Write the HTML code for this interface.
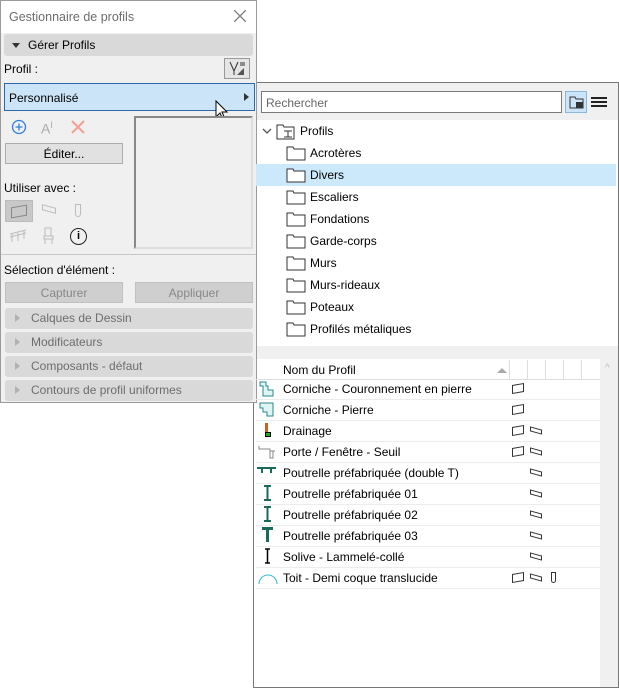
<!DOCTYPE html><html><head><style>
body{margin:0;width:619px;height:688px;background:#fff;position:relative;overflow:hidden;font-family:"Liberation Sans",sans-serif;font-size:12px;color:#000}
div{position:absolute;box-sizing:border-box}
.t{white-space:nowrap}
.hd{left:4px;width:248px;height:21px;background:#d9d9d9;border-radius:3px;color:#6d6d6d;padding:3px 0 0 26px}
.hd:before{content:"";position:absolute;left:10px;top:6px;border-left:5px solid #b0b0b0;border-top:4px solid transparent;border-bottom:4px solid transparent}
.row{left:256px;width:360px;height:22px;padding:4px 0 0 54px}
.fd{position:absolute;left:30px;top:3px}
.lr{left:256px;width:344px;height:21px;border-bottom:1px solid #ececec;padding:3px 0 0 27px}
</style></head><body>
<!-- right panel -->
<div style="left:253px;top:82px;width:366px;height:606px;border:1px solid #777;background:#fff">
<div style="left:0;top:0;width:364px;height:37px;background:#f0f0f0"></div>
<div class="t" style="left:7px;top:8px;width:301px;height:22px;border:1px solid #7a7a7a;background:#fff;color:#666;padding:4px 0 0 4px">Rechercher</div>
<div style="left:311px;top:8px;width:22px;height:22px;background:#cce4f7;border:1px solid #88b8e0"></div>
<svg style="position:absolute;left:315px;top:12px" width="15" height="14"><path d="M1 2h5l1 2h7v9H1z" fill="none" stroke="#333"/><rect x="7" y="7" width="7" height="6" fill="#333"/></svg>
<div style="left:337px;top:14px;width:16px;height:10px;border-top:2px solid #222;border-bottom:2px solid #222"></div>
<div style="left:337px;top:18px;width:16px;height:2px;background:#222"></div>
<div style="left:0;top:263px;width:364px;height:13px;background:#f0f0f0"></div>
<div style="left:346px;top:276px;width:18px;height:328px;background:#f0f0f0;color:#bbb;font-size:10px;padding:4px 0 0 5px">^</div>
</div>
<!-- left panel -->
<div style="left:0;top:0;width:257px;height:403px;background:#f0f0f0;border:1px solid #9a9a9a">
<div style="left:0;top:0;width:255px;height:32px;background:#fff"></div>
<div class="t" style="left:8px;top:9px;color:#6d6d6d;font-size:12.5px">Gestionnaire de profils</div>
<svg style="position:absolute;left:233px;top:9px" width="12" height="12"><path d="M0 0L12 12M12 0L0 12" stroke="#777" stroke-width="1.2"/></svg>
<div style="left:3px;top:33px;width:249px;height:22px;background:#d9d9d9;border-radius:3px"></div>
<div style="left:11px;top:42px;border-top:5px solid #333;border-left:4px solid transparent;border-right:4px solid transparent"></div>
<div class="t" style="left:27px;top:37px">Gérer Profils</div>
<div class="t" style="left:3px;top:61px">Profil :</div>
<div style="left:223px;top:57px;width:26px;height:21px;border:1px solid #999;background:#e5e5e5"></div>
<svg style="position:absolute;left:228px;top:60px" width="18" height="16"><path d="M1 1L5 10L9 1M5 10V14" fill="none" stroke="#333"/><path d="M8 14L15 7V14Z" fill="#555"/><path d="M11 2h5M11 4h5" stroke="#333"/></svg>
<div style="left:3px;top:82px;width:251px;height:28px;background:#cce4f7;border:1px solid #2a6aa8"></div>
<div class="t" style="left:8px;top:90px">Personnalisé</div>
<div style="left:243px;top:92px;border-left:5px solid #333;border-top:4px solid transparent;border-bottom:4px solid transparent"></div>
<svg style="position:absolute;left:214px;top:99px" width="14" height="22"><path d="M1 1V17L5 13L8 20L10 19L7 12H12Z" fill="#fff" stroke="#000"/></svg>
<div style="left:133px;top:115px;width:119px;height:133px;border:2px solid #888;border-right-color:#ddd;border-bottom-color:#ddd;background:#f0f0f0"></div>
<svg style="position:absolute;left:10px;top:118px" width="16" height="16"><circle cx="8" cy="8" r="6.5" fill="none" stroke="#2f7de1" stroke-width="1.3"/><path d="M8 4.5V11.5M4.5 8H11.5" stroke="#2f7de1" stroke-width="1.3"/></svg>
<div class="t" style="left:40px;top:119px;color:#aaa;font-size:14px">A<sup style="font-size:9px">I</sup></div>
<svg style="position:absolute;left:70px;top:119px" width="14" height="14"><path d="M1 1L13 13M13 1L1 13" stroke="#f4a090" stroke-width="2"/></svg>
<div style="left:4px;top:142px;width:118px;height:21px;border:1px solid #adadad;background:#e1e1e1;text-align:center;padding-top:3px">Éditer...</div>
<div class="t" style="left:3px;top:180px">Utiliser avec :</div>
<div style="left:4px;top:199px;width:28px;height:22px;background:#c8c8c8;border:1px solid #bbb"></div>
<div style="left:10px;top:205px;width:16px;height:11px;border:1px solid #888;transform:skewY(-10deg)"></div>
<div style="left:41px;top:205px;width:14px;height:6px;border:1px solid #bbb;transform:skewY(15deg)"></div>
<div style="left:74px;top:203px;width:6px;height:13px;border:1px solid #bbb;border-radius:0 0 3px 3px"></div>
<svg style="position:absolute;left:8px;top:228px" width="18" height="14"><path d="M1 5L17 1M1 8L17 4M3 5V13M9 4V12M15 2V10" stroke="#bbb" fill="none"/></svg>
<svg style="position:absolute;left:42px;top:226px" width="12" height="18"><path d="M2 1H8V9H2ZM1 9H10V12H1ZM2 12V17M9 12V17" stroke="#bbb" fill="none"/></svg>
<div style="left:69px;top:227px;width:17px;height:17px;border:1.5px solid #222;border-radius:50%;text-align:center;font-weight:bold;font-size:11px;line-height:14px">i</div>
<div style="left:0;top:253px;width:255px;height:1px;background:#c8c8c8"></div>
<div class="t" style="left:3px;top:262px">Sélection d'élément :</div>
<div style="left:4px;top:281px;width:118px;height:21px;background:#cfcfcf;border:1px solid #c0c0c0;color:#888;text-align:center;padding-top:3px">Capturer</div>
<div style="left:134px;top:281px;width:118px;height:21px;background:#cfcfcf;border:1px solid #c0c0c0;color:#888;text-align:center;padding-top:3px">Appliquer</div>
<div class="hd t" style="top:307px">Calques de Dessin</div>
<div class="hd t" style="top:331px">Modificateurs</div>
<div class="hd t" style="top:355px">Composants - défaut</div>
<div class="hd t" style="top:379px">Contours de profil uniformes</div>
</div>
<svg style="position:absolute;left:262px;top:127px" width="10" height="8"><path d="M1 2L5 6L9 2" fill="none" stroke="#555" stroke-width="1.3"/></svg>
<svg style="position:absolute;left:276px;top:124px" width="20" height="16"><path d="M1 1h6l1 2h10v12H1z" fill="none" stroke="#333"/><path d="M8 7h8M12 7v6M8 13h8" stroke="#333"/></svg>
<div class="t" style="left:300px;top:124px">Profils</div>
<div class="row t" style="top:142px"><svg class="fd" width="20" height="16"><path d="M1 2h6l1 2h11v11H1z" fill="#fff" stroke="#333"/></svg>Acrotères</div>
<div class="row t" style="top:164px;background:#cce8fb"><svg class="fd" width="20" height="16"><path d="M1 2h6l1 2h11v11H1z" fill="#fff" stroke="#333"/></svg>Divers</div>
<div class="row t" style="top:186px"><svg class="fd" width="20" height="16"><path d="M1 2h6l1 2h11v11H1z" fill="#fff" stroke="#333"/></svg>Escaliers</div>
<div class="row t" style="top:208px"><svg class="fd" width="20" height="16"><path d="M1 2h6l1 2h11v11H1z" fill="#fff" stroke="#333"/></svg>Fondations</div>
<div class="row t" style="top:230px"><svg class="fd" width="20" height="16"><path d="M1 2h6l1 2h11v11H1z" fill="#fff" stroke="#333"/></svg>Garde-corps</div>
<div class="row t" style="top:252px"><svg class="fd" width="20" height="16"><path d="M1 2h6l1 2h11v11H1z" fill="#fff" stroke="#333"/></svg>Murs</div>
<div class="row t" style="top:274px"><svg class="fd" width="20" height="16"><path d="M1 2h6l1 2h11v11H1z" fill="#fff" stroke="#333"/></svg>Murs-rideaux</div>
<div class="row t" style="top:296px"><svg class="fd" width="20" height="16"><path d="M1 2h6l1 2h11v11H1z" fill="#fff" stroke="#333"/></svg>Poteaux</div>
<div class="row t" style="top:318px"><svg class="fd" width="20" height="16"><path d="M1 2h6l1 2h11v11H1z" fill="#fff" stroke="#333"/></svg>Profilés métaliques</div>
<div class="t" style="left:256px;top:360px;width:344px;height:20px;border-bottom:1px solid #ddd;padding:3px 0 0 27px">Nom du Profil</div>
<div style="left:497px;top:368px;border-bottom:5px solid #aaa;border-left:5px solid transparent;border-right:5px solid transparent"></div>
<div style="left:509px;top:360px;width:91px;height:20px;border-left:1px solid #ddd;background:linear-gradient(90deg,transparent 17px,#ddd 17px,#ddd 18px,transparent 18px,transparent 35px,#ddd 35px,#ddd 36px,transparent 36px,transparent 53px,#ddd 53px,#ddd 54px,transparent 54px,transparent 71px,#ddd 71px,#ddd 72px,transparent 72px)"></div>
<div class="lr t" style="top:379px">Corniche - Couronnement en pierre</div>
<div class="lr t" style="top:400px">Corniche - Pierre</div>
<div class="lr t" style="top:421px">Drainage</div>
<div class="lr t" style="top:442px">Porte / Fenêtre - Seuil</div>
<div class="lr t" style="top:463px">Poutrelle préfabriquée (double T)</div>
<div class="lr t" style="top:484px">Poutrelle préfabriquée 01</div>
<div class="lr t" style="top:505px">Poutrelle préfabriquée 02</div>
<div class="lr t" style="top:526px">Poutrelle préfabriquée 03</div>
<div class="lr t" style="top:547px">Solive - Lammelé-collé</div>
<div class="lr t" style="top:568px">Toit - Demi coque translucide</div>
<!-- list icons -->
<svg style="position:absolute;left:259px;top:381px" width="16" height="16"><path d="M1 1H7V5H9V9H14V15H4V5H1Z" fill="#dff4f4" stroke="#2a8a8a"/></svg>
<svg style="position:absolute;left:259px;top:402px" width="16" height="16"><path d="M1 1H14V14H8V10H4V6H1Z" fill="#dff4f4" stroke="#2a8a8a"/></svg>
<div style="left:265px;top:423px;width:3px;height:10px;background:#d06020"></div>
<div style="left:265px;top:432px;width:6px;height:5px;background:#2a2;border:1px solid #000"></div>
<svg style="position:absolute;left:258px;top:445px" width="18" height="14"><path d="M1 1V4H12V6H17M12 6V13H15V6" fill="none" stroke="#888"/></svg>
<svg style="position:absolute;left:257px;top:467px" width="20" height="8"><path d="M0 1H19" stroke="#1a6a5a" stroke-width="2"/><path d="M5 1V6M14 1V6" stroke="#1a6a5a" stroke-width="2"/></svg>
<svg style="position:absolute;left:263px;top:485px" width="9" height="16"><path d="M1 1H8M4.5 1V15M1 15H8" stroke="#1a6a5a" stroke-width="2"/></svg>
<svg style="position:absolute;left:263px;top:506px" width="9" height="16"><path d="M1 1H8M4.5 1V15M1 15H8" stroke="#1a6a5a" stroke-width="2"/></svg>
<svg style="position:absolute;left:262px;top:527px" width="11" height="16"><path d="M0 1.5H11M5.5 1V15" stroke="#1a6a5a" stroke-width="3"/></svg>
<svg style="position:absolute;left:264px;top:548px" width="7" height="16"><path d="M1 1H6M3.5 1V15M1 15H6" stroke="#000" stroke-width="1.5"/></svg>
<svg style="position:absolute;left:258px;top:571px" width="20" height="14"><path d="M1 13A9 9 0 0 1 19 13" fill="none" stroke="#30c0d0"/></svg>
<!-- use icons -->
<div style="left:512px;top:384px;width:12px;height:9px;border:1px solid #333;transform:skewY(-10deg)"></div>
<div style="left:512px;top:405px;width:12px;height:9px;border:1px solid #333;transform:skewY(-10deg)"></div>
<div style="left:512px;top:426px;width:12px;height:9px;border:1px solid #333;transform:skewY(-10deg)"></div>
<div style="left:512px;top:447px;width:12px;height:9px;border:1px solid #333;transform:skewY(-10deg)"></div>
<div style="left:512px;top:573px;width:12px;height:9px;border:1px solid #333;transform:skewY(-10deg)"></div>
<div style="left:530px;top:428px;width:12px;height:5px;border:1px solid #333;transform:skewY(15deg)"></div>
<div style="left:530px;top:449px;width:12px;height:5px;border:1px solid #333;transform:skewY(15deg)"></div>
<div style="left:530px;top:470px;width:12px;height:5px;border:1px solid #333;transform:skewY(15deg)"></div>
<div style="left:530px;top:491px;width:12px;height:5px;border:1px solid #333;transform:skewY(15deg)"></div>
<div style="left:530px;top:512px;width:12px;height:5px;border:1px solid #333;transform:skewY(15deg)"></div>
<div style="left:530px;top:533px;width:12px;height:5px;border:1px solid #333;transform:skewY(15deg)"></div>
<div style="left:530px;top:554px;width:12px;height:5px;border:1px solid #333;transform:skewY(15deg)"></div>
<div style="left:530px;top:575px;width:12px;height:5px;border:1px solid #333;transform:skewY(15deg)"></div>
<div style="left:551px;top:572px;width:5px;height:11px;border:1px solid #333;border-radius:0 0 3px 3px"></div>
</body></html>
